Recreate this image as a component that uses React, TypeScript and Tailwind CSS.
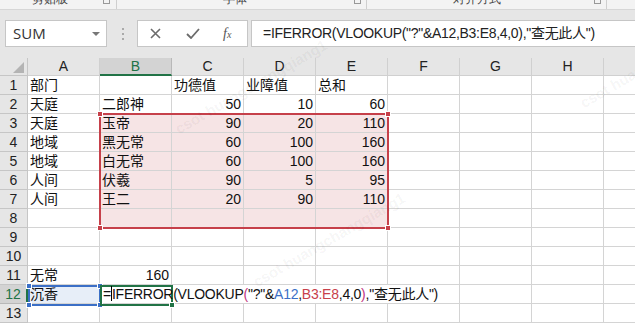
const COLS = ['A', 'B', 'C', 'D', 'E', 'F', 'G', 'H', '']

type Cell = { v: string; right?: boolean }

const DATA: Record<number, Record<string, Cell>> = {
  1: { A: { v: '部门' }, C: { v: '功德值' }, D: { v: '业障值' }, E: { v: '总和' } },
  2: { A: { v: '天庭' }, B: { v: '二郎神' }, C: { v: '50', right: true }, D: { v: '10', right: true }, E: { v: '60', right: true } },
  3: { A: { v: '天庭' }, B: { v: '玉帝' }, C: { v: '90', right: true }, D: { v: '20', right: true }, E: { v: '110', right: true } },
  4: { A: { v: '地域' }, B: { v: '黑无常' }, C: { v: '60', right: true }, D: { v: '100', right: true }, E: { v: '160', right: true } },
  5: { A: { v: '地域' }, B: { v: '白无常' }, C: { v: '60', right: true }, D: { v: '100', right: true }, E: { v: '160', right: true } },
  6: { A: { v: '人间' }, B: { v: '伏羲' }, C: { v: '90', right: true }, D: { v: '5', right: true }, E: { v: '95', right: true } },
  7: { A: { v: '人间' }, B: { v: '王二' }, C: { v: '20', right: true }, D: { v: '90', right: true }, E: { v: '110', right: true } },
  11: { A: { v: '无常' }, B: { v: '160', right: true } },
  12: { A: { v: '沉香' } },
}

const font = "font-['Liberation_Sans','Noto_Sans_CJK_SC',sans-serif]"

function inRange(row: number, col: string) {
  return row >= 3 && row <= 8 && ['B', 'C', 'D', 'E'].includes(col)
}

function Handle({ className }: { className: string }) {
  return <div className={`absolute h-[6px] w-[6px] border border-white ${className}`} />
}

function FormulaText() {
  return (
    <>
      <span>=</span>
      <span className="inline-block h-[15px] w-px translate-y-[2px] bg-black" />
      <span>IFERROR(VLOOKUP</span>
      <span className="text-[#c2367f]">(</span>
      <span>"?"&amp;</span>
      <span className="text-[#3b6fc6]">A12</span>
      <span>,</span>
      <span className="text-[#c8404b]">B3:E8</span>
      <span>,4,0</span>
      <span className="text-[#c2367f]">)</span>
      <span>,"查无此人")</span>
    </>
  )
}

function Ribbon() {
  return (
    <div className="relative h-[10px] overflow-hidden border-b border-[#d6d6d6] bg-[#f3f3f3] text-[12px] text-[#444]">
      <div className="flex h-full">
        <div className="flex w-[116px] items-start">
          <span className="ml-[32px] -mt-[8px] leading-[14px]">剪贴板</span>
          <span className="ml-auto mr-[6px] -mt-[3px] h-[7px] w-[7px] border border-[#999]" />
        </div>
        <div className="h-[9px] w-px bg-[#cfcfcf]" />
        <div className="flex w-[249px] items-start">
          <span className="ml-[106px] -mt-[8px] leading-[14px]">字体</span>
          <span className="ml-auto mr-[5px] -mt-[3px] h-[7px] w-[7px] border border-[#999]" />
        </div>
        <div className="h-[9px] w-px bg-[#cfcfcf]" />
        <div className="flex w-[239px] items-start">
          <span className="ml-[86px] -mt-[8px] leading-[14px]">对齐方式</span>
          <span className="ml-auto mr-[5px] -mt-[3px] h-[7px] w-[7px] border border-[#999]" />
        </div>
        <div className="h-[9px] w-px bg-[#cfcfcf]" />
      </div>
    </div>
  )
}

function FormulaBar() {
  return (
    <div className="flex h-[48px] items-start bg-[#e6e6e6] pt-[10px]">
      <div className="ml-[5px] flex h-[27px] w-[102px] items-center border border-[#c6c6c6] bg-white pl-[7px] pr-[6px] text-[15px] text-[#333] font-['Open_Sans',sans-serif]">
        <span>SUM</span>
        <span className="ml-auto h-0 w-0 border-x-[4px] border-t-[4px] border-x-transparent border-t-[#777]" />
      </div>
      <div className="ml-[15px] mt-[8px] flex flex-col gap-[3px]">
        <span className="h-[2px] w-[2px] bg-[#aaa]" />
        <span className="h-[2px] w-[2px] bg-[#aaa]" />
        <span className="h-[2px] w-[2px] bg-[#aaa]" />
      </div>
      <div className="ml-[13px] flex h-[27px] w-[111px] items-center border border-[#c6c6c6] bg-white text-[#6b6b6b]">
        <svg className="ml-[12px]" width="11" height="11" viewBox="0 0 11 11">
          <path d="M1 1L10 10M10 1L1 10" stroke="#6b6b6b" strokeWidth="1.6" />
        </svg>
        <svg className="ml-[25px]" width="14" height="11" viewBox="0 0 14 11">
          <path d="M1 6L5 10L13 1" stroke="#6b6b6b" strokeWidth="1.8" fill="none" />
        </svg>
        <span className="ml-[23px] font-['Liberation_Serif',serif] text-[14px] italic text-[#555]">
          f<span className="text-[10px]">x</span>
        </span>
      </div>
      <div className="ml-[3px] flex h-[27px] flex-1 items-center border-y border-l border-[#c6c6c6] bg-white pl-[11px] text-[14px] tracking-[-0.3px] text-[#222] font-['Liberation_Sans','Noto_Sans_CJK_SC',sans-serif] whitespace-nowrap">
        =IFERROR(VLOOKUP("?"&amp;A12,B3:E8,4,0),"查无此人")
      </div>
    </div>
  )
}

function HeaderRow() {
  return (
    <div className="flex h-[18px]">
      <div className="relative h-full w-[28px] shrink-0 border-b border-r border-[#c6c6c6] bg-[#e6e6e6]">
        <div className="absolute bottom-[2px] right-[3px] h-0 w-0 border-b-[11px] border-l-[11px] border-b-[#b4b4b4] border-l-transparent" />
      </div>
      {COLS.map((c) =>
        c === 'B' ? (
          <div key={c} className="flex h-full w-[72px] shrink-0 items-center justify-center border-b-2 border-r border-b-[#217346] border-r-[#b8b8b8] bg-[#d3d3d3] text-[14px] text-[#217346]">
            {c}
          </div>
        ) : (
          <div key={c || 'x'} className="flex h-full w-[72px] shrink-0 items-center justify-center border-b border-r border-[#d0d0d0] bg-[#e6e6e6] text-[14px] text-[#222]">
            {c}
          </div>
        )
      )}
    </div>
  )
}

function Row({ n }: { n: number }) {
  const active = n === 12
  const cells = DATA[n] ?? {}
  return (
    <div className="flex h-[19px]">
      <div
        className={`flex h-full w-[28px] shrink-0 items-center justify-center border-b text-[14px] ${
          active
            ? 'border-r-2 border-b-[#b8b8b8] border-r-[#217346] bg-[#d3d3d3] text-[#217346]'
            : 'border-r border-[#c6c6c6] bg-[#e6e6e6] text-[#222]'
        }`}
      >
        {n}
      </div>
      {COLS.map((c, i) => {
        const cell = cells[c]
        const pink = inRange(n, c)
        const hideRight = active && ['B', 'C', 'D', 'E'].includes(c)
        let bg = 'bg-white'
        if (pink) bg = 'bg-[#f6e4e5]'
        if (active && c === 'A') bg = 'bg-[#e7eef8]'
        return (
          <div
            key={i}
            className={`relative flex h-full w-[72px] shrink-0 items-center border-b border-[#d4d4d4] px-[2px] text-[14px] leading-[19px] text-[#111] whitespace-nowrap ${bg} ${
              hideRight ? '' : 'border-r'
            } ${cell?.right ? 'justify-end' : ''}`}
          >
            {active && c === 'B' ? (
              <span className="relative z-10 ml-px tracking-[-0.25px]">
                <FormulaText />
              </span>
            ) : (
              cell?.v
            )}
          </div>
        )
      })}
    </div>
  )
}

function Sheet() {
  const rows = Array.from({ length: 13 }, (_, i) => i + 1)
  return (
    <div className={`relative ${font}`}>
      <HeaderRow />
      {rows.map((n) => (
        <Row key={n} n={n} />
      ))}

      {/* B3:E8 reference range */}
      <div className="pointer-events-none absolute left-[99px] top-[55px] h-[116px] w-[290px] border-2 border-[#c6404a]">
        <Handle className="-left-[4px] -top-[4px] bg-[#c6404a]" />
        <Handle className="-right-[4px] -top-[4px] bg-[#c6404a]" />
        <Handle className="-bottom-[4px] -right-[4px] bg-[#c6404a]" />
        <Handle className="-bottom-[4px] -left-[4px] bg-[#c6404a]" />
      </div>

      {/* A12 reference */}
      <div className="pointer-events-none absolute left-[28px] top-[227px] h-[21px] w-[73px] border-2 border-[#3b6fc6]">
        <Handle className="-left-[4px] -top-[4px] bg-[#3b6fc6]" />
        <Handle className="-right-[4px] -top-[4px] bg-[#3b6fc6]" />
        <Handle className="-bottom-[4px] -right-[4px] bg-[#3b6fc6]" />
        <Handle className="-bottom-[4px] -left-[4px] bg-[#3b6fc6]" />
      </div>

      {/* active cell B12 */}
      <div className="pointer-events-none absolute left-[100px] top-[227px] h-[21px] w-[73px] border-2 border-[#217346]">
        <Handle className="-bottom-[4px] -right-[4px] bg-[#217346]" />
      </div>
    </div>
  )
}

function Watermark() {
  return (
    <div className="pointer-events-none absolute inset-0 overflow-hidden font-['Liberation_Sans',sans-serif] text-[15px] font-bold text-black/[0.05]">
      <span className="absolute left-[165px] top-[76px] -rotate-[30deg] whitespace-nowrap">csot huangchangqiang1</span>
      <span className="absolute left-[243px] top-[229px] -rotate-[30deg] whitespace-nowrap">csot huangchangqiang1</span>
      <span className="absolute left-[570px] top-[50px] -rotate-[30deg] whitespace-nowrap">csot huangchangqiang1</span>
    </div>
  )
}

export default function App() {
  return (
    <div className="relative h-[327px] w-[635px] overflow-hidden bg-white">
      <Ribbon />
      <FormulaBar />
      <Sheet />
      <Watermark />
    </div>
  )
}
